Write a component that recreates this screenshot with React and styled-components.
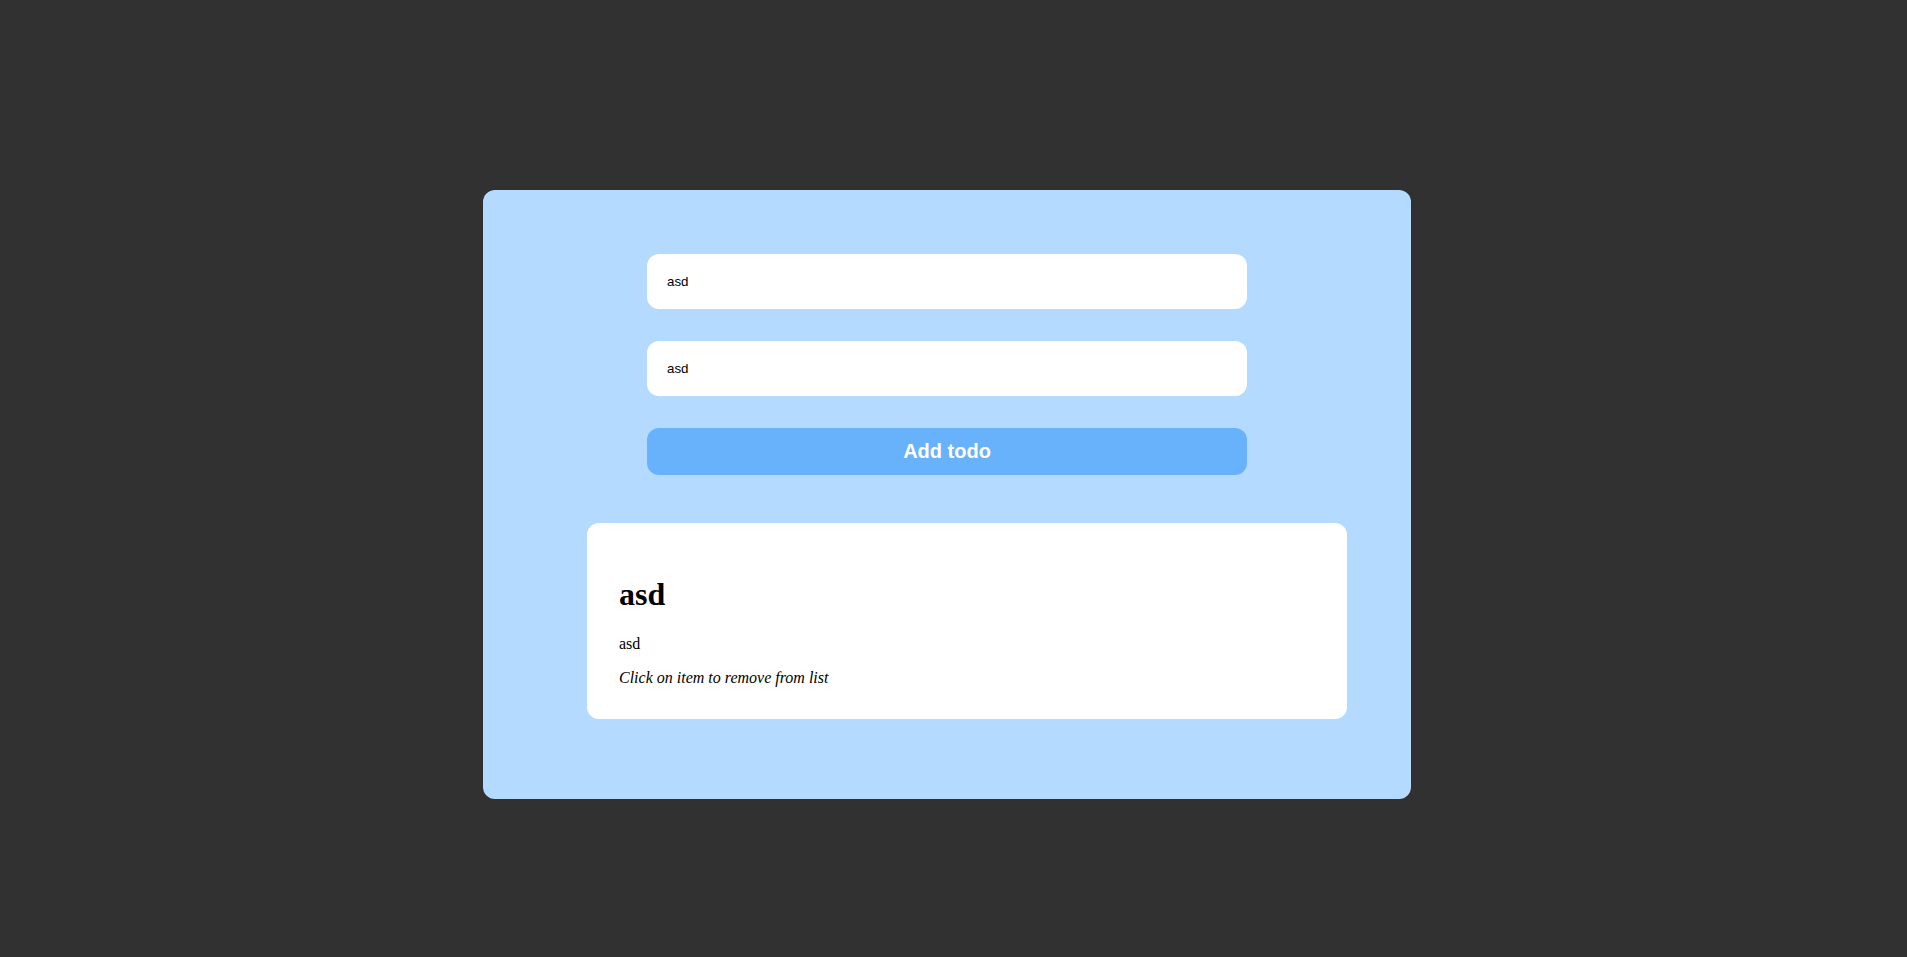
import styled, { createGlobalStyle } from "styled-components";

const GlobalStyle = createGlobalStyle`
  body {
    margin: 0;
    background: #313131;
    font-family: "Liberation Serif", "Times New Roman", serif;
  }
`;

const Page = styled.div`
  min-height: 957px;
  padding: 190px 0 0 483px;
  box-sizing: border-box;
`;

const Panel = styled.div`
  width: 928px;
  height: 609px;
  box-sizing: border-box;
  background: #b4dbff;
  border-radius: 12px;
  padding: 64px 0 0 104px;
`;

const Form = styled.form`
  display: flex;
  flex-direction: column;
  gap: 32px;
  width: 600px;
  margin-left: 60px;
`;

const Input = styled.input`
  height: 55px;
  box-sizing: border-box;
  border: none;
  border-radius: 12px;
  background: #fff;
  padding: 0 20px;
  font-family: "Liberation Sans", Arial, sans-serif;
  font-size: 13.33px;
  color: #000;
  outline: none;
`;

const Button = styled.button`
  height: 47px;
  border: none;
  border-radius: 12px;
  background: #68b2fb;
  color: #fff;
  font-family: "Liberation Sans", Arial, sans-serif;
  font-size: 20px;
  font-weight: bold;
  cursor: pointer;
`;

const Card = styled.div`
  width: 760px;
  box-sizing: border-box;
  margin-top: 48px;
  background: #fff;
  border-radius: 12px;
  padding: 32px 32px 16px;
  color: #000;
`;

const Title = styled.h1`
  font-size: 32px;
  margin: 0.67em 0 22px;
`;

const Text = styled.p`
  font-size: 16px;
  margin: 16px 0;
`;

const Hint = styled(Text)`
  font-style: italic;
`;

function App() {
  return (
    <>
      <GlobalStyle />
      <Page>
        <Panel>
          <Form onSubmit={(e) => e.preventDefault()}>
            <Input defaultValue="asd" />
            <Input defaultValue="asd" />
            <Button type="submit">Add todo</Button>
          </Form>
          <Card>
            <Title>asd</Title>
            <Text>asd</Text>
            <Hint>Click on item to remove from list</Hint>
          </Card>
        </Panel>
      </Page>
    </>
  );
}

export default App;
